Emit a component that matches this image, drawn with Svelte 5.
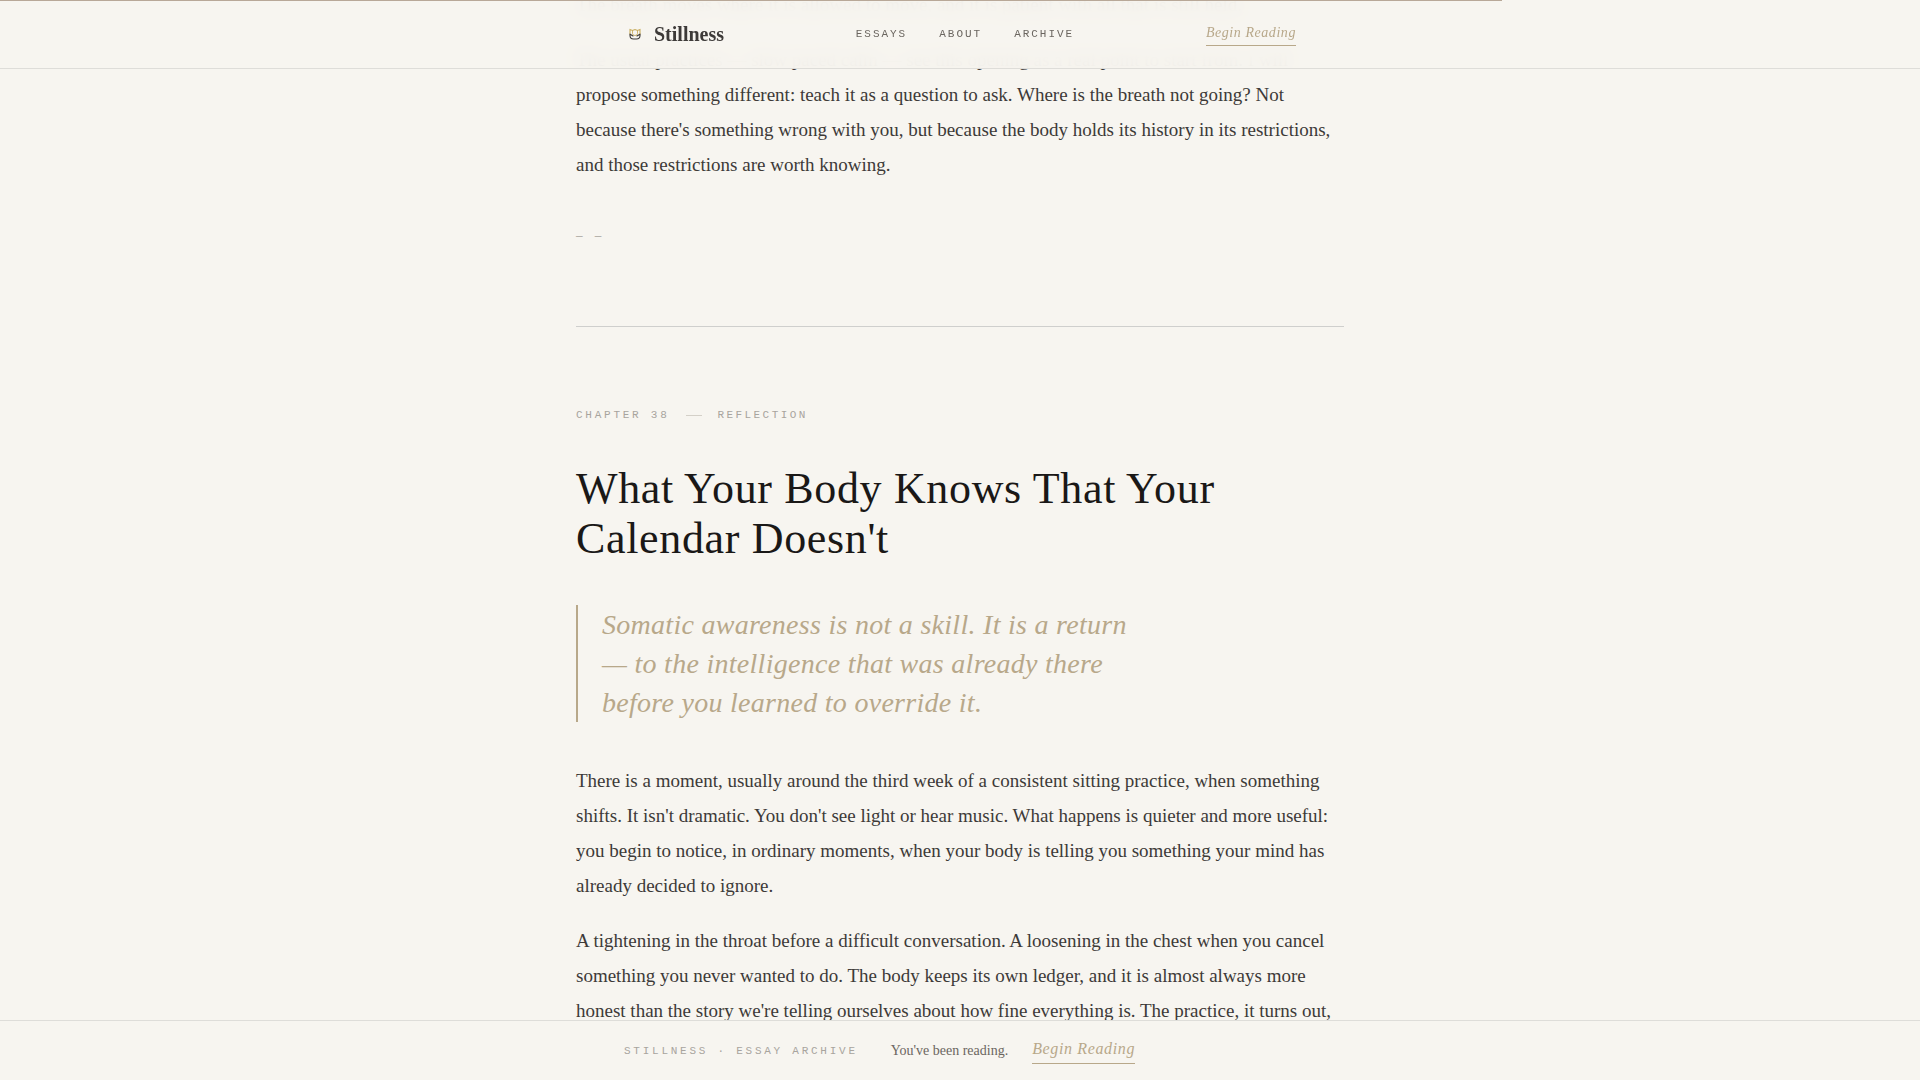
<script>
  const links = ['Essays', 'About', 'Archive'];
  const progress = 78.25;
</script>

<div class="progress" style="width: {progress}%"></div>

<header class="topbar">
  <div class="bar-inner">
    <a class="brand" href="#top">
      <svg viewBox="0 0 22 22" width="22" height="22" aria-hidden="true">
        <g fill="none" stroke-linecap="round">
          <path d="M6 11V6.500L8.500 7.500 11 6.500 13.500 7.500 16 6.500V11" stroke="#c9ad5f" stroke-width="1.100" />
          <path d="M8.500 7.500v3a2.500 2 0 0 0 5 0v-3" stroke="#c9ad5f" stroke-width="0.900" />
          <path d="M6 11v1.500a3.500 3.500 0 0 0 3.500 3.500h3a3.500 3.500 0 0 0 3.500-3.500V11M6.500 11.500l2.500 1.500M15.500 11.500l-2.500 1.500" stroke="#3d3a38" stroke-width="1.100" />
        </g>
      </svg>
      <span>Stillness</span>
    </a>
    <nav>
      {#each links as link}
        <a href="#{link.toLowerCase()}">{link}</a>
      {/each}
    </nav>
    <a class="cta" href="#begin">Begin Reading</a>
  </div>
</header>

<main id="top">
  <section class="previous">
    <p>
      The breath moves where it is allowed to move, and it is patient with all that is still held.
    </p>
    <p>
      The usual practices — slow paced calm — see this opening as a real point to start from. I will
      propose something different: teach it as a question to ask. Where is the breath not going? Not
      because there's something wrong with you, but because the body holds its history in its
      restrictions, and those restrictions are worth knowing.
    </p>
    <div class="endmark">— —</div>
  </section>

  <article id="essays">
    <div class="meta"><span>Chapter 38</span><i></i><span class="kind">Reflection</span></div>
    <h1>What Your Body Knows That Your Calendar Doesn't</h1>
    <blockquote>
      Somatic awareness is not a skill. It is a return — to the intelligence that was already there
      before you learned to override it.
    </blockquote>
    <p>
      There is a moment, usually around the third week of a consistent sitting practice, when
      something shifts. It isn't dramatic. You don't see light or hear music. What happens is quieter
      and more useful: you begin to notice, in ordinary moments, when your body is telling you
      something your mind has already decided to ignore.
    </p>
    <p>
      A tightening in the throat before a difficult conversation. A loosening in the chest when you
      cancel something you never wanted to do. The body keeps its own ledger, and it is almost always
      more honest than the story we're telling ourselves about how fine everything is. The practice,
      it turns out,
    </p>
  </article>
</main>

<footer>
  <div class="foot-inner">
    <span class="label">Stillness · Essay Archive</span>
    <span class="note">You've been reading.</span>
    <a class="cta large" href="#begin">Begin Reading</a>
  </div>
</footer>

<style>
  :global(body) {
    margin: 0;
    background: #f7f5f0;
    height: 100vh;
    overflow: hidden;
  }
  :global(#app) {
    font-family: 'Liberation Serif', serif;
    color: #3d3a38;
    display: flow-root;
  }
  .progress {
    position: fixed;
    top: 0;
    left: 0;
    height: 1px;
    background: #b8a898;
    z-index: 3;
  }
  .topbar {
    position: fixed;
    inset: 0 0 auto;
    z-index: 2;
    background: rgba(247, 244, 239, 0.95);
    backdrop-filter: blur(8px);
    border-bottom: 1px solid #deddd9;
  }
  .bar-inner,
  .foot-inner,
  main {
    box-sizing: border-box;
    width: 100%;
    max-width: 768px;
    margin: 0 auto;
  }
  .bar-inner {
    height: 68px;
    padding: 0 48px;
    display: flex;
    align-items: center;
    justify-content: space-between;
  }
  a {
    color: inherit;
    text-decoration: none;
  }
  .brand {
    display: flex;
    align-items: center;
    gap: 8px;
    font-size: 20px;
    font-weight: 700;
  }
  nav {
    display: flex;
    gap: 32px;
    font: 11px 'Liberation Mono', monospace;
    letter-spacing: 0.18em;
    text-transform: uppercase;
    color: #6b6660;
  }
  .cta {
    padding-bottom: 2px;
    font-size: 14px;
    line-height: 21px;
    font-style: italic;
    letter-spacing: 0.04em;
    color: #b8a88a;
    border-bottom: 1px solid #b8a88a;
  }
  .cta.large {
    font-size: 16px;
    line-height: 24px;
  }
  .previous {
    margin-top: -13px;
    padding-bottom: 82px;
    border-bottom: 1px solid #cfcfcd;
  }
  p {
    margin: 0 0 20px;
    font-size: 19px;
    line-height: 35px;
  }
  .endmark {
    margin-top: 46px;
    font: 11px/16px 'Liberation Mono', monospace;
    letter-spacing: 0.25em;
    color: #a8a49e;
  }
  .meta {
    display: flex;
    align-items: center;
    gap: 16px;
    padding-top: 80px;
    font: 11px/16px 'Liberation Mono', monospace;
    letter-spacing: 0.25em;
    text-transform: uppercase;
    color: #a8a49e;
  }
  .meta i {
    width: 16px;
    height: 1px;
    background: #d4d0c8;
  }
  .kind {
    letter-spacing: 0.22em;
  }
  h1 {
    margin: 41px 0;
    font-size: 44px;
    line-height: 50px;
    font-weight: 400;
    letter-spacing: 0.015em;
    color: #1a1817;
  }
  blockquote {
    box-sizing: border-box;
    max-width: 580px;
    margin: 0 0 41px;
    padding-left: 24px;
    border-left: 2px solid #b8a88a;
    font-size: 28px;
    line-height: 39px;
    font-style: italic;
    letter-spacing: 0.01em;
    color: #b8a88a;
  }
  footer {
    position: fixed;
    inset: auto 0 0;
    z-index: 2;
    background: #f7f5f0;
    border-top: 1px solid #deddd9;
  }
  .foot-inner {
    height: 59px;
    padding: 0 48px;
    display: flex;
    align-items: center;
  }
  .label {
    font: 11px 'Liberation Mono', monospace;
    letter-spacing: 0.25em;
    text-transform: uppercase;
    color: #a8a49e;
  }
  .note {
    margin: 0 24px 0 33px;
    font-size: 14px;
    color: #6b6660;
  }
</style>
